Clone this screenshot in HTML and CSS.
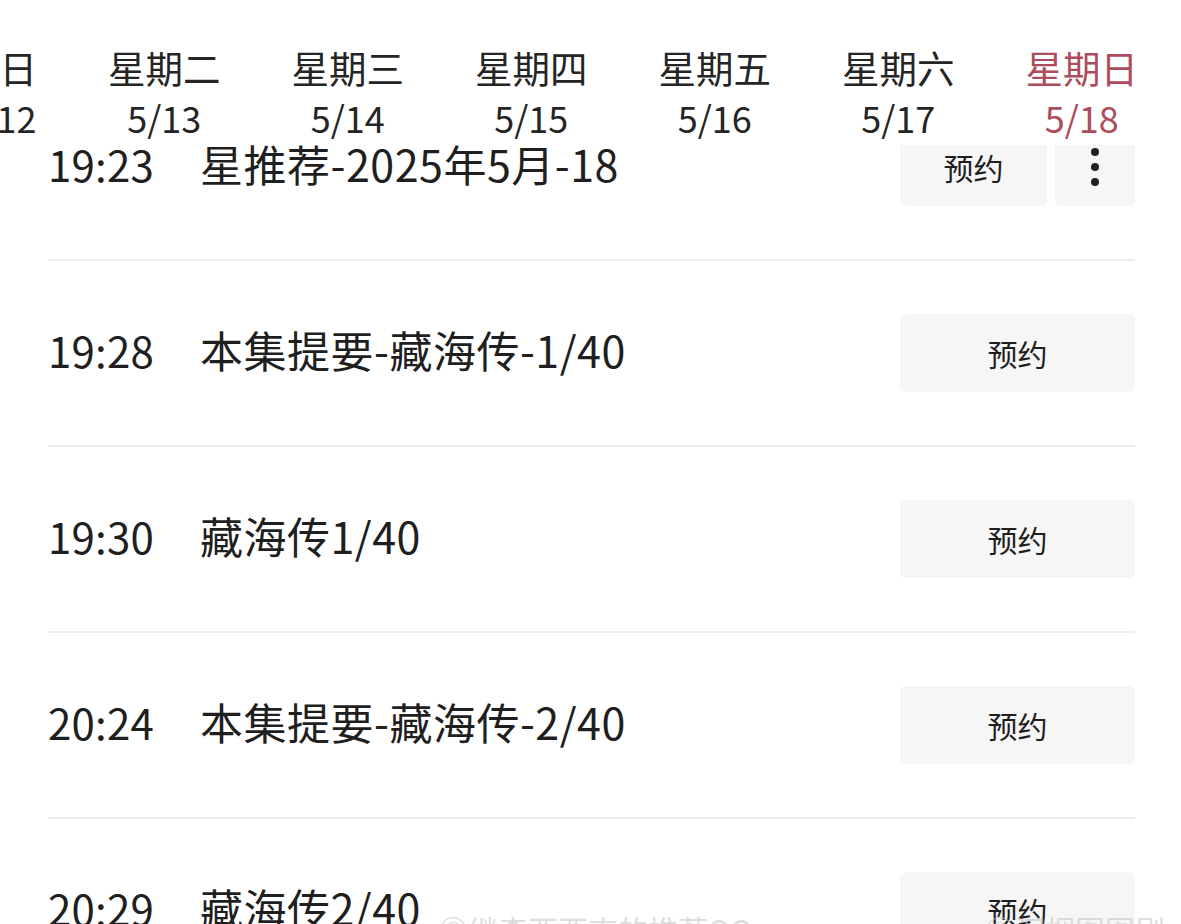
FILE: index.html
```html
<!DOCTYPE html>
<html lang="zh-CN">
<head>
<meta charset="utf-8">
<title>节目单</title>
<link rel="stylesheet" href="styles.css">
</head>
<body>
<div class="page">
  <header class="days">
    <div class="day"><span class="name">今日</span><span class="date">5/12</span></div>
    <div class="day"><span class="name">星期二</span><span class="date">5/13</span></div>
    <div class="day"><span class="name">星期三</span><span class="date">5/14</span></div>
    <div class="day"><span class="name">星期四</span><span class="date">5/15</span></div>
    <div class="day"><span class="name">星期五</span><span class="date">5/16</span></div>
    <div class="day"><span class="name">星期六</span><span class="date">5/17</span></div>
    <div class="day active"><span class="name">星期日</span><span class="date">5/18</span></div>
  </header>
  <main class="list">
    <div class="list-inner">
      <div class="row">
        <span class="time">19:23</span>
        <span class="title">星推荐-2025年5月-18</span>
        <div class="actions">
          <button class="btn btn-small">预约</button>
          <button class="btn btn-more" aria-label="更多"><i></i><i></i><i></i></button>
        </div>
      </div>
      <div class="row">
        <span class="time">19:28</span>
        <span class="title">本集提要-藏海传-1/40</span>
        <div class="actions"><button class="btn">预约</button></div>
      </div>
      <div class="row">
        <span class="time">19:30</span>
        <span class="title">藏海传1/40</span>
        <div class="actions"><button class="btn">预约</button></div>
      </div>
      <div class="row">
        <span class="time">20:24</span>
        <span class="title">本集提要-藏海传-2/40</span>
        <div class="actions"><button class="btn">预约</button></div>
      </div>
      <div class="row">
        <span class="time">20:29</span>
        <span class="title">藏海传2/40</span>
        <div class="actions"><button class="btn">预约</button></div>
      </div>
    </div>
    <div class="watermark">
      <span class="wm-left">◎继森西西吉的推荐OO</span>
      <span class="wm-right">◎沉烟图图剧</span>
    </div>
  </main>
</div>
</body>
</html>
```

FILE: styles.css
```css
html, body {
  margin: 0;
  padding: 0;
  background: #ffffff;
}

body {
  font-family: "Noto Sans CJK SC", "Noto Sans", sans-serif;
  color: #1f1f1f;
  width: 1181px;
  height: 924px;
  overflow: hidden;
}

.page {
  width: 1181px;
  height: 924px;
  display: flex;
  flex-direction: column;
  overflow: hidden;
}

.days {
  flex: 0 0 145px;
  display: flex;
  gap: 71px;
  margin-left: -38px;
  background: #ffffff;
  position: relative;
  z-index: 2;
}

.day {
  flex: 0 0 auto;
  display: flex;
  flex-direction: column;
  align-items: center;
  padding-top: 42px;
  color: #252525;
}

.day .name {
  font-size: 37.5px;
  line-height: 50px;
  height: 50px;
  white-space: nowrap;
}

.day .date {
  font-size: 36px;
  line-height: 50px;
  height: 50px;
  white-space: nowrap;
}

.day.active {
  color: #ad4c5c;
}

.list {
  flex: 1;
  overflow: hidden;
  position: relative;
}

.list-inner {
  margin-top: -70px;
  padding: 0 46px 0 48px;
}

.row {
  height: 184px;
  border-bottom: 2px solid #ededed;
  display: flex;
  align-items: center;
}

.time {
  flex: 0 0 152px;
  font-size: 42px;
  letter-spacing: 0.2px;
  margin-bottom: 8px;
}

.title {
  flex: 1;
  font-size: 43px;
  letter-spacing: 0.5px;
  white-space: nowrap;
  margin-bottom: 8px;
}

.actions {
  display: flex;
  gap: 8px;
}

.btn {
  width: 235px;
  height: 78px;
  border: none;
  border-radius: 6px;
  background: #f6f6f6;
  font-family: "Noto Sans CJK SC", "Noto Sans", sans-serif;
  font-size: 30px;
  color: #1f1f1f;
  padding: 0;
}

.btn-small {
  width: 147px;
}

.btn-more {
  width: 80px;
  display: flex;
  flex-direction: column;
  align-items: center;
  justify-content: flex-start;
  padding-top: 20px;
  gap: 7px;
}

.btn-more i {
  width: 8px;
  height: 8px;
  border-radius: 50%;
  background: #222;
  display: block;
}

.watermark {
  position: absolute;
  left: 0;
  right: 0;
  top: 762px;
  font-size: 30px;
  color: #c8c8c8;
  opacity: 0.6;
  pointer-events: none;
}

.wm-left {
  position: absolute;
  left: 438px;
}

.wm-right {
  position: absolute;
  left: 985px;
}
```
